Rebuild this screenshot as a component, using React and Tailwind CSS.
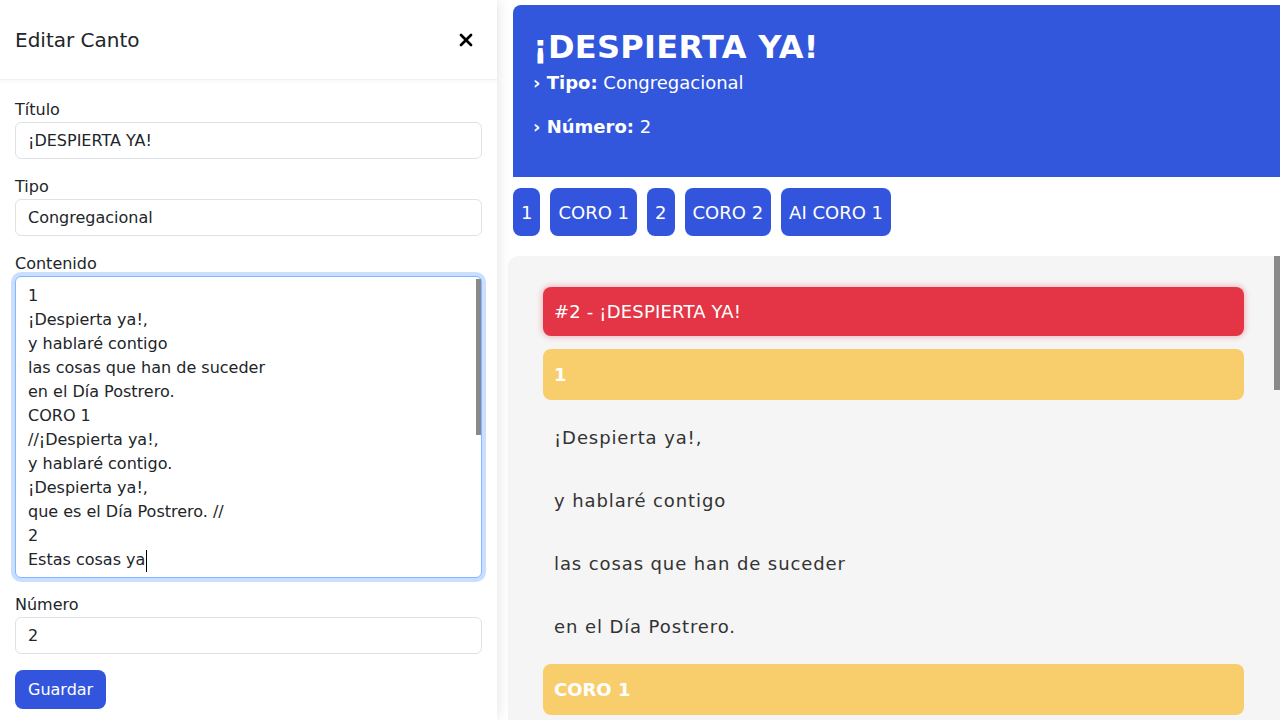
import { X } from 'lucide-react';

const contenido = `1
¡Despierta ya!,
y hablaré contigo
las cosas que han de suceder
en el Día Postrero.
CORO 1
//¡Despierta ya!,
y hablaré contigo.
¡Despierta ya!,
que es el Día Postrero. //
2
Estas cosas ya

están sucediendo,
la hora se acerca,
despierta, hermano.
CORO 2
//Levántate ya,
y sal de tu sueño.
Levántate ya,
que el Señor ya viene. //
Al CORO 1
//¡Despierta ya!,
y hablaré contigo. //`;

const secciones = [
    { tipo: 'titulo', texto: '1' },
    { tipo: 'verso', texto: '¡Despierta ya!,' },
    { tipo: 'verso', texto: 'y hablaré contigo' },
    { tipo: 'verso', texto: 'las cosas que han de suceder' },
    { tipo: 'verso', texto: 'en el Día Postrero.' },
    { tipo: 'titulo', texto: 'CORO 1' },
    { tipo: 'verso', texto: '//¡Despierta ya!,' },
    { tipo: 'verso', texto: 'y hablaré contigo.' },
    { tipo: 'verso', texto: '¡Despierta ya!,' },
    { tipo: 'verso', texto: 'que es el Día Postrero. //' },
    { tipo: 'titulo', texto: '2' },
    { tipo: 'verso', texto: 'Estas cosas ya' },
    { tipo: 'verso', texto: 'están sucediendo,' },
    { tipo: 'titulo', texto: 'CORO 2' },
    { tipo: 'verso', texto: '//Levántate ya,' },
    { tipo: 'verso', texto: 'y sal de tu sueño. //' },
    { tipo: 'titulo', texto: 'AI CORO 1' },
];

const botones = ['1', 'CORO 1', '2', 'CORO 2', 'AI CORO 1'];

function Campo({ label, className = 'mb-[16px]', children }) {
    return (
        <div className={className}>
            <label className="block text-[16px] leading-[24px] text-[#212529]">{label}</label>
            {children}
        </div>
    );
}

export default function App() {
    const inputClass = 'block h-[37px] w-full rounded-[6px] border border-[#dee2e6] bg-white px-[12px] text-[16px] text-[#212529] outline-none';

    return (
        <div className="flex h-[720px] w-[1280px] overflow-hidden bg-white font-['DejaVu_Sans',sans-serif]">
            {/* offcanvas de edición */}
            <aside className="relative z-10 flex w-[497px] shrink-0 flex-col bg-white shadow-[0_0_14px_rgba(0,0,0,0.12)]">
                <div className="flex h-[80px] items-center justify-between border-b border-[#f0f0f0] pl-[15px] pr-[21px] shadow-[0_2px_3px_rgba(0,0,0,0.03)]">
                    <h5 className="text-[20px] text-[#212529]">Editar Canto</h5>
                    <X className="h-[20px] w-[20px] text-black" strokeWidth={3.2} />
                </div>
                <div className="px-[15px] pt-[18px]">
                    <Campo label="Título">
                        <input className={inputClass} defaultValue="¡DESPIERTA YA!" />
                    </Campo>
                    <Campo label="Tipo">
                        <input className={inputClass} defaultValue="Congregacional" />
                    </Campo>
                    <Campo label="Contenido" className="mb-[15px]">
                        <div className="relative">
                            <textarea
                                rows={12}
                                defaultValue={contenido}
                                className="block h-[302px] w-full resize-none overflow-y-hidden rounded-[6px] border border-[#86b7fe] bg-white px-[12px] py-[7px] text-[16px] leading-[24px] text-[#212529] shadow-[0_0_0_4px_rgba(13,110,253,0.22)] outline-none"
                            />
                            {/* cursor y barra de desplazamiento */}
                            <div className="absolute left-[131px] top-[274px] h-[22px] w-[1px] bg-black" />
                            <div className="absolute right-[1px] top-[3px] h-[156px] w-[5px] bg-[#8a8a8a]" />
                        </div>
                    </Campo>
                    <Campo label="Número">
                        <input className={inputClass} defaultValue="2" />
                    </Campo>
                    <button className="h-[39px] rounded-[8px] bg-[#3355dd] px-[13px] text-[16px] text-white">Guardar</button>
                </div>
            </aside>

            {/* vista del canto */}
            <main className="flex min-w-0 flex-1 flex-col pl-[16px] pt-[5px]">
                <div className="h-[172px] shrink-0 rounded-tl-[8px] bg-[#3257dc] px-[20px] pt-[23px] text-white">
                    <h1 className="text-[32px] font-bold leading-[38px] tracking-[0.01em]">¡DESPIERTA YA!</h1>
                    <p className="mt-[3px] text-[18px] leading-[27px]"><b>› Tipo:</b> Congregacional</p>
                    <p className="mt-[17px] text-[18px] leading-[27px]"><b>› Número:</b> 2</p>
                </div>

                <div className="mt-[11px] flex shrink-0 gap-[10px]">
                    {botones.map(b => (
                        <button key={b} className="h-[48px] rounded-[8px] bg-[#3355dd] px-[8px] text-[18px] text-white">{b}</button>
                    ))}
                </div>

                <div className="relative -ml-[5px] mt-[20px] min-h-0 flex-1">
                    <div className="flex h-full flex-col overflow-y-hidden rounded-tl-[10px] bg-[#f5f5f5] pl-[35px] pr-[36px] pt-[31px]">
                        <div className="mb-[7px] flex h-[49px] shrink-0 items-center rounded-[8px] bg-[#e33545] px-[11px] text-[18px] tracking-[0.01em] text-white shadow-[0_0_5px_2px_rgba(227,53,69,0.25)]">
                            #2 - ¡DESPIERTA YA!
                        </div>
                        {secciones.map((s, i) =>
                            s.tipo === 'titulo' ? (
                                <div key={i} className="my-[6px] flex h-[51px] shrink-0 items-center rounded-[8px] bg-[#f8cd6b] px-[11px] text-[18px] font-bold text-white">
                                    {s.texto}
                                </div>
                            ) : (
                                <p key={i} className="shrink-0 px-[11px] py-[18px] text-[18px] leading-[27px] tracking-[0.05em] text-[#333]">{s.texto}</p>
                            )
                        )}
                    </div>
                    {/* barra de desplazamiento */}
                    <div className="absolute right-0 top-0 h-[134px] w-[6px] bg-[#8a8a8a]" />
                </div>
            </main>
        </div>
    );
}
